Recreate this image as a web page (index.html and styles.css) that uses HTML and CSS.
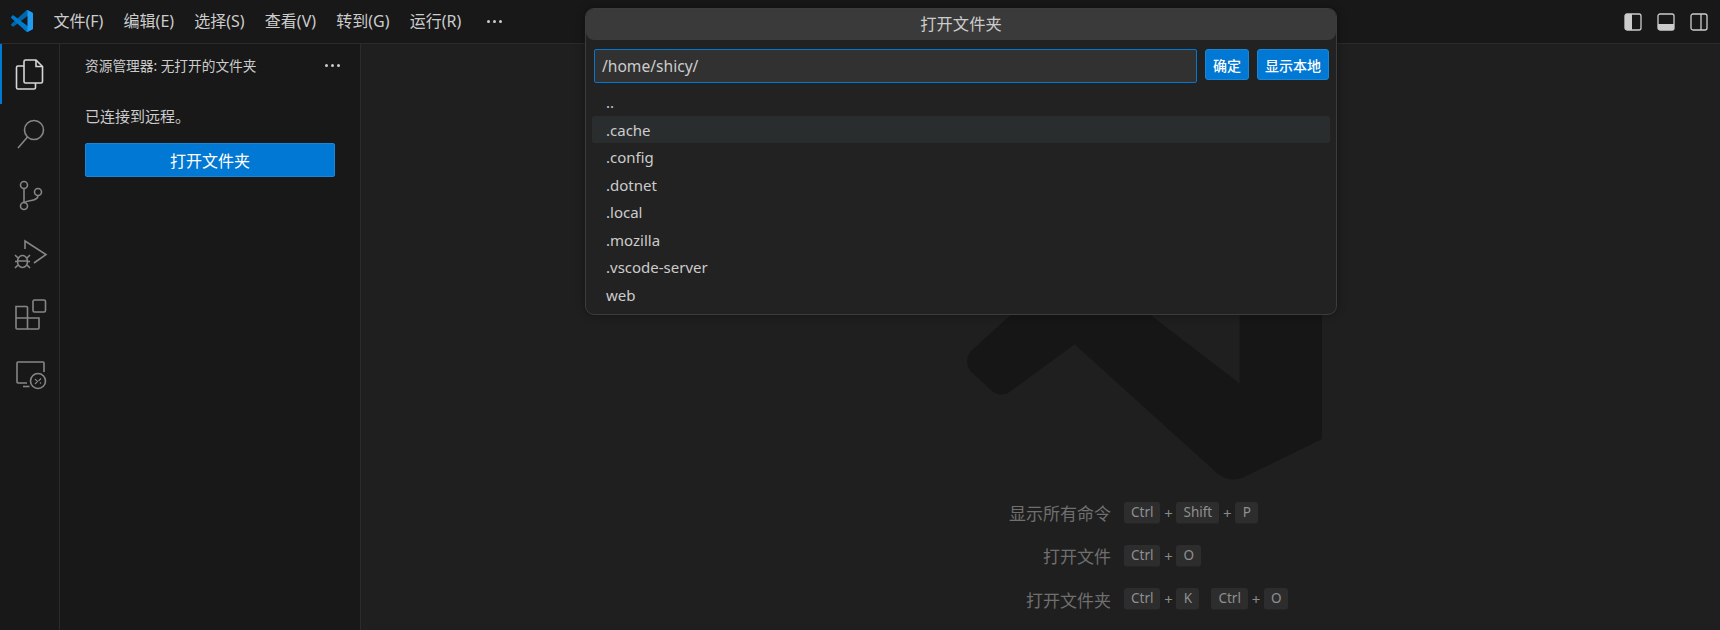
FILE: index.html
```html
<!DOCTYPE html>
<html lang="zh-CN">
<head>
<meta charset="utf-8">
<title>VS Code</title>
<link rel="stylesheet" href="styles.css">
</head>
<body>
<div class="app">
  <header class="titlebar">
    <svg class="logo" viewBox="0 0 100 100"><path fill="#0065a9" d="M96.5 10.8 75.9.9a6.2 6.2 0 0 0-7.1 1.2L1.4 63.5a4.2 4.2 0 0 0 0 6.2l5.5 5c1.5 1.4 3.7 1.5 5.3.3L93.3 13.5c2.7-2 6.7-.1 6.7 3.3v-.2c0-2.4-1.4-4.6-3.5-5.8Z"/><path fill="#007acc" d="M96.5 89.2 75.9 99.1a6.2 6.2 0 0 1-7.1-1.2L1.4 36.5a4.2 4.2 0 0 1 0-6.2l5.5-5c1.5-1.4 3.7-1.5 5.3-.3l81.1 61.5c2.7 2 6.7.1 6.7-3.3v.2c0 2.4-1.4 4.6-3.5 5.8Z"/><path fill="#1f9cf0" d="M75.9 99.1a6.2 6.2 0 0 1-7.1-1.2c2.3 2.3 6.2.7 6.2-2.6V4.7c0-3.3-3.9-4.9-6.2-2.6a6.2 6.2 0 0 1 7.1-1.2l20.6 9.9a6.3 6.3 0 0 1 3.5 5.6v67.2c0 2.4-1.4 4.6-3.5 5.6Z"/></svg>
    <nav class="menu">
      <span class="menu-item">文件(F)</span>
      <span class="menu-item">编辑(E)</span>
      <span class="menu-item">选择(S)</span>
      <span class="menu-item">查看(V)</span>
      <span class="menu-item">转到(G)</span>
      <span class="menu-item">运行(R)</span>
      <span class="menu-more"><i></i><i></i><i></i></span>
    </nav>
    <div class="layout-icons">
      <svg viewBox="0 0 18 18"><rect x="1" y="1" width="16" height="16" rx="2" class="ln"/><path class="fl" d="M1 3a2 2 0 0 1 2-2h5v16H3a2 2 0 0 1-2-2Z"/></svg>
      <svg viewBox="0 0 18 18"><rect x="1" y="1" width="16" height="16" rx="2" class="ln"/><path class="fl" d="M1 11h16v4a2 2 0 0 1-2 2H3a2 2 0 0 1-2-2Z"/></svg>
      <svg viewBox="0 0 18 18"><rect x="1" y="1" width="16" height="16" rx="2" class="ln"/><path class="ln" d="M11 1v16"/></svg>
    </div>
  </header>
  <div class="body">
    <aside class="activity">
      <div class="act active">
        <svg viewBox="0 0 30 30"><path class="st on" d="M9 7H3a1.5 1.5 0 0 0-1.5 1.5v20A1.5 1.5 0 0 0 3 30h16a1.5 1.5 0 0 0 1.5-1.5V24"/><path class="st on" d="M10.500 1H21l6.500 6.500V22.500A1.500 1.500 0 0 1 26 24H10.500A1.500 1.500 0 0 1 9 22.500V2.500A1.500 1.500 0 0 1 10.500 1Z"/><path class="st on" d="M21 1v6.500h6.500"/></svg>
      </div>
      <div class="act">
        <svg viewBox="0 0 30 30"><circle class="st" cx="19" cy="10" r="9.500"/><path class="st" d="M12.500 17 3 28"/></svg>
      </div>
      <div class="act">
        <svg viewBox="0 0 30 30"><circle class="st" cx="9" cy="5" r="3.500"/><circle class="st" cx="9" cy="26" r="3.500"/><circle class="st" cx="23" cy="12" r="3.500"/><path class="st" d="M9 8.500v14M23 15.500c0 4-4 4.500-7 5s-5 .5-7 2.500"/></svg>
      </div>
      <div class="act">
        <svg viewBox="0 0 30 30"><path class="st" d="M10 9V1l21 13.500L19 23"/><ellipse class="st" cx="7.500" cy="21.500" rx="5" ry="6"/><path class="st" d="M0 15l3 3M15 15l-3 3M0 21.500h2.500M15 21.500h-2.500M0 28l3-3M15 28l-3-3M2.500 21h10"/></svg>
      </div>
      <div class="act">
        <svg viewBox="0 0 30 30"><path class="st" d="M1 5.500h10.500a1 1 0 0 1 1 1V28H2a1 1 0 0 1-1-1ZM1 17h23v10a1 1 0 0 1-1 1H12.500"/><rect class="st" x="18" y="-1" width="12.500" height="12" rx="1.500"/></svg>
      </div>
      <div class="act">
        <svg viewBox="0 0 30 30"><path class="st" d="M12 22H3a1 1 0 0 1-1-1V2a1 1 0 0 1 1-1h25a1 1 0 0 1 1 1v9"/><path class="st" d="M8 25.500h6.500"/><circle class="st" cx="23" cy="20" r="7.500"/><path class="st thin" d="M20 18l2.500 2.500-2.500 2.500M26 17.500 23.500 20M26 22.500l-1-1"/></svg>
      </div>
    </aside>
    <aside class="sidebar">
      <div class="side-head">
        <span class="side-title">资源管理器: 无打开的文件夹</span>
        <span class="side-more"><i></i><i></i><i></i></span>
      </div>
      <p class="side-msg">已连接到远程。</p>
      <button class="side-btn">打开文件夹</button>
    </aside>
    <main class="editor">
      <svg class="watermark" viewBox="0 0 100 100" preserveAspectRatio="none"><path d="M78 98.900 100 88.300V16.400c0-2.400-1.400-4.600-3.500-5.600L75.900.900a6.200 6.200 0 0 0-7.100 1.200L29.400 38 12.200 25c-1.600-1.200-3.800-1.100-5.300.2L1.400 30.300a4.200 4.200 0 0 0 0 6.200L16.300 50 1.400 63.500a4.200 4.200 0 0 0 0 6.200l5.500 5c1.500 1.400 3.700 1.500 5.300.3L30.300 61.800 70.400 97.800c2.100 1.900 5 2.300 7.600 1.100ZM76.800 27.200 46.900 50l29.900 22.800Z"/></svg>
      <div class="shortcuts">
        <div class="sc-row">
          <span class="sc-label">显示所有命令</span>
          <span class="keys"><kbd>Ctrl</kbd><b>+</b><kbd>Shift</kbd><b>+</b><kbd>P</kbd></span>
        </div>
        <div class="sc-row">
          <span class="sc-label">打开文件</span>
          <span class="keys"><kbd>Ctrl</kbd><b>+</b><kbd>O</kbd></span>
        </div>
        <div class="sc-row">
          <span class="sc-label">打开文件夹</span>
          <span class="keys"><kbd>Ctrl</kbd><b>+</b><kbd>K</kbd></span>
          <span class="keys"><kbd>Ctrl</kbd><b>+</b><kbd>O</kbd></span>
        </div>
      </div>
    </main>
  </div>
  <section class="dialog">
    <div class="dlg-title">打开文件夹</div>
    <div class="dlg-input-row">
      <div class="dlg-input">/home/shicy/</div>
      <button class="dlg-btn ok">确定</button>
      <button class="dlg-btn local">显示本地</button>
    </div>
    <ul class="dlg-list">
      <li>..</li>
      <li class="hl">.cache</li>
      <li>.config</li>
      <li>.dotnet</li>
      <li>.local</li>
      <li>.mozilla</li>
      <li>.vscode-server</li>
      <li>web</li>
    </ul>
  </section>
</div>
</body>
</html>
```
FILE: styles.css
```css
* { box-sizing: border-box; }
html, body { margin: 0; height: 100%; overflow: hidden; background: #1f1f1f; }
body { font-family: "Noto Sans", "Noto Sans CJK SC", sans-serif; color: #ccc; }
.app { position: relative; width: 1720px; height: 630px; display: flex; flex-direction: column; }

.titlebar { height: 44px; flex: none; display: flex; align-items: center; background: #181818; border-bottom: 1px solid #2b2b2b; }
.logo { width: 22px; height: 22px; margin-left: 11px; flex: none; margin-top: -1px; }
.menu { display: flex; align-items: center; margin-left: 10.400px; }
.menu-item { font-size: 16px; padding: 0 10.100px; white-space: nowrap; color: #ccc; line-height: 22px; margin-top: -1px; }
.menu-more, .side-more { display: flex; gap: 3px; }
.menu-more { margin-left: 16px; margin-top: -1px; }
.menu-more i, .side-more i { width: 3px; height: 3px; border-radius: 50%; background: #ccc; }
.layout-icons { margin-left: auto; display: flex; gap: 15px; padding-right: 12px; }
.layout-icons svg { width: 18px; height: 18px; }
.ln { fill: none; stroke: #ccc; stroke-width: 1.300; }
.fl { fill: #ccc; }

.body { flex: 1; display: flex; min-height: 0; }
.activity { width: 60px; flex: none; background: #181818; border-right: 1px solid #2b2b2b; }
.act { height: 60.400px; display: flex; align-items: center; justify-content: center; }
.act svg { width: 30px; height: 30px; overflow: visible; }
.act.active { box-shadow: inset 2px 0 0 #0078d4; }
.st { fill: none; stroke: #868686; stroke-width: 1.600; }
.st.on { stroke: #d7d7d7; }
.st.thin { stroke-width: 1.100; }

.sidebar { width: 301px; flex: none; background: #181818; border-right: 1px solid #2b2b2b; padding: 0 25px; }
.side-head { height: 42px; display: flex; align-items: center; justify-content: space-between; margin-right: -5px; }
.side-title { font-size: 13.700px; color: #ccc; }
.side-msg { margin: 19px 0 0; font-size: 15px; line-height: 22px; color: #ccc; }
.side-btn { display: block; width: 250px; height: 34px; margin-top: 16px; border: 1px solid #1a86d6; border-radius: 2px; background: #0078d4; color: #fff; font: inherit; font-size: 16px; }

.editor { flex: 1; position: relative; background: #1f1f1f; display: flex; flex-direction: column; overflow: hidden; }
.watermark { position: absolute; left: 606px; top: 79px; width: 355px; height: 358px; }
.watermark path { fill: #161616; fill-rule: evenodd; }
.shortcuts { margin-top: 457px; margin-left: 400px; position: relative; display: flex; flex-direction: column; gap: 20.300px; }
.sc-row { display: flex; align-items: center; height: 23px; }
.sc-label { width: 350px; text-align: right; font-size: 17px; color: #6f6f6f; margin-right: 13px; white-space: nowrap; }
.keys { display: flex; align-items: center; margin-right: 12px; font-size: 13.500px; }
.keys b { font-weight: 400; font-size: 15px; width: 16px; text-align: center; color: #8a8a8a; }
kbd { font-family: inherit; font-size: 13.500px; height: 22px; line-height: 20px; min-width: 23px; text-align: center; padding: 0 7px; border-radius: 3px; background: #2d2d2d; border-bottom: 1px solid #252525; color: #909090; }

.dialog { position: absolute; left: 585px; top: 8px; width: 752px; height: 307px; background: #222; border: 1px solid #3c3c3c; border-radius: 9px; box-shadow: 0 0 8px rgba(0,0,0,.36); padding: 0; }
.dlg-title { height: 31px; line-height: 30px; text-align: center; font-size: 16.300px; color: #ccc; background: #3a3a3a; border-radius: 8px; }
.dlg-input-row { display: flex; align-items: flex-start; padding: 9px 7px 0 8px; gap: 8px; }
.dlg-input { flex: none; width: 603px; height: 34px; margin-right: 0; border: 1px solid #0078d4; border-radius: 2px; background: #313131; font-size: 15.600px; line-height: 32px; padding-left: 7px; color: #ccc; }
.dlg-btn { height: 31px; border: 1px solid #1a86d6; border-radius: 3px; background: #0078d4; color: #fff; font: inherit; font-size: 14px; font-weight: 500; padding: 0; }
.dlg-btn.ok { width: 44px; }
.dlg-btn.local { width: 72px; }
.dlg-list { list-style: none; margin: 5px 6px 0; padding: 0; }
.dlg-list li { height: 27.500px; line-height: 29px; padding-left: 14px; font-size: 15px; color: #ccc; border-radius: 3px; }
.dlg-list li.hl { background: #2a2d2e; }
```
